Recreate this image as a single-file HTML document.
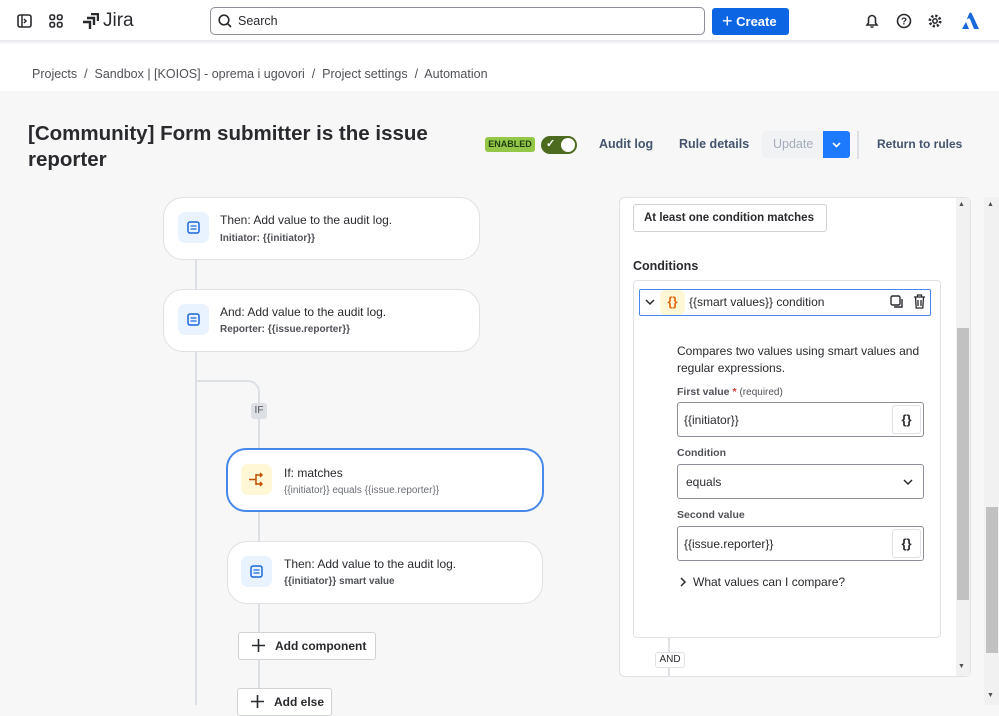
<!DOCTYPE html>
<html><head><meta charset="utf-8"><style>
*{box-sizing:border-box;margin:0;padding:0}
body{width:999px;height:705px;overflow:hidden;background:#f7f7f7;font-family:"Liberation Sans",sans-serif;color:#172b4d;position:relative}
.a{position:absolute}
.card{position:absolute;background:#fff;border:1px solid #dfe1e6;border-radius:20px}
.ic{position:absolute;width:31px;height:31px;border-radius:7px;background:#e9f2ff}
.t1{position:absolute;font-size:12px;color:#292a2e}
.t2{position:absolute;font-size:10px;color:#505258;font-weight:bold}
.btn{position:absolute;background:#fff;border:1px solid #d0d2d6;border-radius:3px;font-size:12px;font-weight:bold;color:#292a2e;white-space:nowrap;overflow:hidden}
.lbl{position:absolute;font-size:10.5px;color:#505258;font-weight:bold}
.inp{position:absolute;left:677px;width:247px;height:35px;border:1px solid #8c8f97;border-radius:3px;background:#fff;font-size:12px;padding:10px 6px;color:#292a2e}
.br{position:absolute;right:2px;top:2px;width:29px;height:29px;border:1px solid #dfe1e6;border-radius:3px;font-weight:bold;font-size:13px;text-align:center;line-height:27px}
.hb{position:absolute;font-size:12.5px;color:#44546f;font-weight:bold;white-space:nowrap}
</style></head><body>
<div class="a" style="left:0;top:0;width:999px;height:42px;background:#fff;border-bottom:2px solid #ebecf0"></div>
<svg class="a" style="left:17px;top:14px" width="15" height="14"><rect x="1" y="1" width="13" height="12" rx="2" fill="none" stroke="#292a2e" stroke-width="1.6"/><path d="M5 1v12M7 5l2 2-2 2" fill="none" stroke="#292a2e" stroke-width="1.5"/></svg>
<svg class="a" style="left:49px;top:14px" width="14" height="14"><g fill="none" stroke="#292a2e" stroke-width="1.6"><rect x="1" y="1" width="4.5" height="4.5" rx="1.5"/><rect x="8.5" y="1" width="4.5" height="4.5" rx="1.5"/><rect x="1" y="8.5" width="4.5" height="4.5" rx="1.5"/><rect x="8.5" y="8.5" width="4.5" height="4.5" rx="1.5"/></g></svg>
<svg class="a" style="left:81px;top:13px" width="18" height="17"><path d="M2 9h7v7M6 5h7v7M10 1h7v7" fill="none" stroke="#292a2e" stroke-width="2.4"/></svg>
<div class="a" style="left:103px;top:10px;font-size:19px;color:#292a2e">Jira</div>
<div class="a" style="left:210px;top:7px;width:495px;height:28px;border:1px solid #8c8f97;border-radius:5px;background:#fff"></div>
<svg class="a" style="left:218px;top:14px" width="14" height="14"><circle cx="6" cy="6" r="4.8" fill="none" stroke="#292a2e" stroke-width="1.6"/><path d="M9.5 9.5L13 13" stroke="#292a2e" stroke-width="1.6"/></svg>
<div class="a" style="left:238px;top:14px;font-size:12.5px;color:#292a2e">Search</div>
<div class="a" style="left:712px;top:8px;width:77px;height:27px;background:#0c66e4;border-radius:3px;color:#fff;font-size:13px;font-weight:bold;padding:6px 0 0 10px"><span style="font-size:18px;font-weight:normal;position:relative;top:1px;line-height:10px">+</span> Create</div>
<svg class="a" style="left:865px;top:13px" width="14" height="16"><path d="M2 12h10l-1.5-2V6a3.5 3.5 0 0 0-7 0v4zM5.5 14h3" fill="none" stroke="#292a2e" stroke-width="1.6"/></svg>
<svg class="a" style="left:896px;top:13px" width="16" height="16"><circle cx="8" cy="8" r="6.5" fill="none" stroke="#292a2e" stroke-width="1.6"/><text x="8" y="11.5" font-size="10" font-weight="bold" text-anchor="middle" fill="#292a2e" font-family="Liberation Sans">?</text></svg>
<svg class="a" style="left:927px;top:13px" width="16" height="16"><circle cx="8" cy="8" r="5.2" fill="none" stroke="#292a2e" stroke-width="2.6" stroke-dasharray="2.2 1.9"/><circle cx="8" cy="8" r="2.2" fill="none" stroke="#292a2e" stroke-width="1.5"/></svg>
<svg class="a" style="left:962px;top:12px" width="17" height="18"><path d="M4.5 8C6 6 7 6 8 7L12 17H17L10 2C9 0 8 0 7 2zM4 10L0 17H7" fill="#1868db"/></svg>
<div class="a" style="left:0;top:44px;width:999px;height:47px;background:#fff"></div>
<div class="a" style="left:32px;top:67px;font-size:12.5px;color:#505258">Projects &nbsp;/&nbsp; Sandbox | [KOIOS] - oprema i ugovori &nbsp;/&nbsp; Project settings &nbsp;/&nbsp; Automation</div>
<div class="a" style="left:28px;top:121px;width:440px;font-size:20.5px;font-weight:bold;line-height:25.5px;color:#292a2e">[Community] Form submitter is the issue reporter</div>
<div class="a" style="left:485px;top:137px;width:50px;height:15px;background:#94c748;border-radius:3px;font-size:9px;font-weight:bold;color:#1f3d0f;text-align:center;line-height:15px">ENABLED</div>
<div class="a" style="left:541px;top:136px;width:36px;height:18px;background:#4c6b1f;border-radius:9px"></div>
<div class="a" style="left:561px;top:138px;width:14px;height:14px;background:#fff;border-radius:50%"></div>
<div class="a" style="left:546px;top:137px;font-size:11px;color:#fff;font-weight:bold">✓</div>
<div class="hb" style="left:599px;top:137px">Audit log</div>
<div class="hb" style="left:679px;top:137px">Rule details</div>
<div class="a" style="left:762px;top:131px;width:61px;height:27px;background:#f1f2f4;border-radius:3px 0 0 3px;font-size:12.5px;color:#a5adba;padding:6px 0 0 11px">Update</div>
<div class="a" style="left:823px;top:131px;width:27px;height:27px;background:#1d7afc;border-radius:0 3px 3px 0"></div>
<svg class="a" style="left:831px;top:141px" width="11" height="8"><path d="M2 2l3.5 3.5L9 2" fill="none" stroke="#fff" stroke-width="1.6"/></svg>
<div class="a" style="left:857px;top:131px;width:2px;height:28px;background:#dcdfe4"></div>
<div class="hb" style="left:877px;top:137px;font-size:12px">Return to rules</div>
<div class="a" style="left:195px;top:259px;width:2px;height:446px;background:#dcdfe4"></div>
<div class="a" style="left:196px;top:380px;width:64px;height:68px;border-top:2px solid #dcdfe4;border-right:2px solid #dcdfe4;border-top-right-radius:12px"></div>
<div class="a" style="left:251px;top:403px;width:16px;height:16px;background:#dcdfe4;border-radius:3px;font-size:10px;color:#505258;text-align:center;line-height:16px">IF</div>
<div class="a" style="left:258px;top:512px;width:2px;height:190px;background:#dcdfe4"></div>
<div class="card" style="left:163px;top:197px;width:317px;height:63px"></div>
<div class="ic" style="left:178px;top:212px"></div>
<svg class="a" style="left:187px;top:221px" width="13" height="13"><rect x="1" y="1" width="11" height="11" rx="2" fill="none" stroke="#1868db" stroke-width="1.5"/><path d="M3.5 5h6M3.5 8h6" stroke="#1868db" stroke-width="1.3"/></svg>
<div class="t1" style="left:220px;top:213px">Then: Add value to the audit log.</div>
<div class="t2" style="left:220px;top:233px">Initiator: {{initiator}}</div>
<div class="card" style="left:163px;top:289px;width:317px;height:63px"></div>
<div class="ic" style="left:178px;top:304px"></div>
<svg class="a" style="left:187px;top:313px" width="13" height="13"><rect x="1" y="1" width="11" height="11" rx="2" fill="none" stroke="#1868db" stroke-width="1.5"/><path d="M3.5 5h6M3.5 8h6" stroke="#1868db" stroke-width="1.3"/></svg>
<div class="t1" style="left:220px;top:305px">And: Add value to the audit log.</div>
<div class="t2" style="left:220px;top:324px">Reporter: {{issue.reporter}}</div>
<div class="card" style="left:226px;top:448px;width:318px;height:64px;border:2px solid #4688ec"></div>
<div class="ic" style="left:241px;top:464px;background:#fff7d6"></div>
<svg class="a" style="left:248px;top:472px" width="17" height="15"><path d="M1 7.5h7M8 2v11M8 3h6M8 12h6M12 1l2 2-2 2M12 10l2 2-2 2" fill="none" stroke="#c25100" stroke-width="1.5"/></svg>
<div class="t1" style="left:284px;top:466px">If: matches</div>
<div class="a" style="left:284px;top:485px;font-size:10px;color:#6b6e76">{{initiator}} equals {{issue.reporter}}</div>
<div class="card" style="left:227px;top:541px;width:316px;height:63px"></div>
<div class="ic" style="left:241px;top:556px"></div>
<svg class="a" style="left:250px;top:565px" width="13" height="13"><rect x="1" y="1" width="11" height="11" rx="2" fill="none" stroke="#1868db" stroke-width="1.5"/><path d="M3.5 5h6M3.5 8h6" stroke="#1868db" stroke-width="1.3"/></svg>
<div class="t1" style="left:284px;top:557px">Then: Add value to the audit log.</div>
<div class="t2" style="left:284px;top:576px">{{initiator}} smart value</div>
<div class="btn" style="left:238px;top:632px;width:138px;height:28px;padding:6px 0 0 36px">Add component</div>
<svg class="a" style="left:252px;top:639px" width="13" height="13"><path d="M6.5 0v13M0 6.5h13" stroke="#292a2e" stroke-width="1.6"/></svg>
<div class="btn" style="left:237px;top:688px;width:95px;height:28px;padding:6px 0 0 36px">Add else</div>
<svg class="a" style="left:251px;top:695px" width="13" height="13"><path d="M6.5 0v13M0 6.5h13" stroke="#292a2e" stroke-width="1.6"/></svg>
<div class="a" style="left:619px;top:197px;width:352px;height:480px;background:#fff;border:1px solid #dfe1e6;border-radius:6px"></div>
<div class="a" style="left:956px;top:198px;width:14px;height:478px;background:#f1f1f1"></div>
<div class="a" style="left:957px;top:328px;width:12px;height:272px;background:#c1c1c1"></div>
<div class="a" style="left:958px;top:201px;font-size:7px;color:#505050">▲</div>
<div class="a" style="left:958px;top:663px;font-size:7px;color:#505050">▼</div>
<div class="btn" style="left:633px;top:204px;width:194px;height:28px;padding:7px 0 0 10px;font-size:11.5px">At least one condition matches</div>
<div class="a" style="left:633px;top:259px;font-size:12.5px;font-weight:bold;color:#292a2e">Conditions</div>
<div class="a" style="left:633px;top:280px;width:308px;height:358px;border:1px solid #dfe1e6;border-radius:4px;background:#fff"></div>
<div class="a" style="left:639px;top:289px;width:292px;height:27px;border:1.5px solid #4688ec;border-radius:2px"></div>
<svg class="a" style="left:645px;top:298px" width="10" height="8"><path d="M1 2l4 4 4-4" fill="none" stroke="#292a2e" stroke-width="1.5"/></svg>
<div class="a" style="left:660px;top:290px;width:25px;height:25px;background:#fff7d6;border-radius:6px;color:#e56910;font-size:13px;font-weight:bold;text-align:center;line-height:24px">{}</div>
<div class="a" style="left:689px;top:295px;font-size:12px;color:#292a2e">{{smart values}} condition</div>
<svg class="a" style="left:890px;top:295px" width="14" height="14"><rect x="1" y="1" width="9" height="9" rx="1.5" fill="none" stroke="#292a2e" stroke-width="1.4"/><path d="M12 4v8H4" fill="none" stroke="#292a2e" stroke-width="1.4"/></svg>
<svg class="a" style="left:913px;top:294px" width="13" height="15"><path d="M1 3h11M4.5 3V1h4v2M2.5 3l.7 11h6.6l.7-11M5 6v6M8 6v6" fill="none" stroke="#292a2e" stroke-width="1.3"/></svg>
<div class="a" style="left:677px;top:343px;width:250px;font-size:12px;line-height:17px;color:#292a2e">Compares two values using smart values and regular expressions.</div>
<div class="lbl" style="left:677px;top:386px">First value <span style="color:#c9372c">*</span> <span style="font-weight:normal;font-size:10px">(required)</span></div>
<div class="inp" style="top:402px">{{initiator}}<div class="br">{}</div></div>
<div class="lbl" style="left:677px;top:447px">Condition</div>
<div class="inp" style="top:464px;padding-left:8px">equals</div>
<svg class="a" style="left:903px;top:478px" width="10" height="8"><path d="M1 2l4 4 4-4" fill="none" stroke="#292a2e" stroke-width="1.5"/></svg>
<div class="lbl" style="left:677px;top:509px">Second value</div>
<div class="inp" style="top:526px">{{issue.reporter}}<div class="br">{}</div></div>
<svg class="a" style="left:679px;top:577px" width="8" height="10"><path d="M2 1l4 4-4 4" fill="none" stroke="#292a2e" stroke-width="1.5"/></svg>
<div class="a" style="left:693px;top:575px;font-size:12px;color:#292a2e">What values can I compare?</div>
<div class="a" style="left:668px;top:638px;width:2px;height:38px;background:#dfe1e6"></div>
<div class="a" style="left:655px;top:652px;width:30px;height:16px;background:#fff;border:1px solid #dfe1e6;border-radius:3px;font-size:10px;color:#292a2e;text-align:center;line-height:14px">AND</div>
<div class="a" style="left:984px;top:197px;width:15px;height:508px;background:#f1f1f1"></div>
<div class="a" style="left:986px;top:507px;width:12px;height:146px;background:#c1c1c1"></div>
<div class="a" style="left:987px;top:201px;font-size:7px;color:#505050">▲</div>
<div class="a" style="left:987px;top:692px;font-size:7px;color:#505050">▼</div>
</body></html>
